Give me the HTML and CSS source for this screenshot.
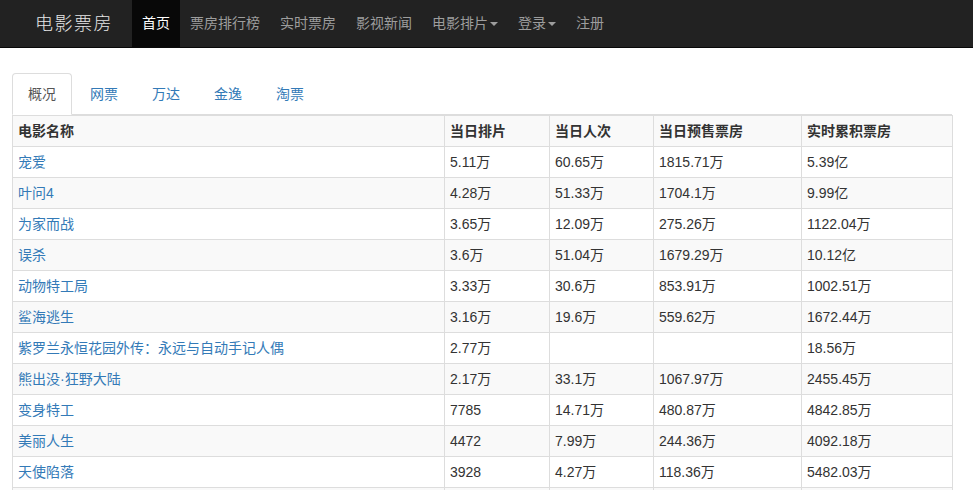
FILE: index.html
```html
<!DOCTYPE html>
<html lang="zh-CN">
<head>
<meta charset="utf-8">
<title>电影票房</title>
<link rel="stylesheet" href="styles.css">
</head>
<body>
<nav class="navbar">
  <a class="brand" href="#">电影票房</a>
  <ul class="nav">
    <li class="active"><a href="#">首页</a></li>
    <li><a href="#">票房排行榜</a></li>
    <li><a href="#">实时票房</a></li>
    <li><a href="#">影视新闻</a></li>
    <li><a href="#">电影排片<span class="caret"></span></a></li>
    <li><a href="#">登录<span class="caret"></span></a></li>
    <li><a href="#">注册</a></li>
  </ul>
</nav>
<main class="content">
  <ul class="tabs">
    <li class="active"><a href="#">概况</a></li>
    <li><a href="#">网票</a></li>
    <li><a href="#">万达</a></li>
    <li><a href="#">金逸</a></li>
    <li><a href="#">淘票</a></li>
  </ul>
  <table class="grid">
    <colgroup>
      <col class="c1"><col class="c2"><col class="c3"><col class="c4"><col class="c5">
    </colgroup>
    <tbody>
      <tr class="head"><th>电影名称</th><th>当日排片</th><th>当日人次</th><th>当日预售票房</th><th>实时累积票房</th></tr>
      <tr><td><a href="#">宠爱</a></td><td>5.11万</td><td>60.65万</td><td>1815.71万</td><td>5.39亿</td></tr>
      <tr><td><a href="#">叶问4</a></td><td>4.28万</td><td>51.33万</td><td>1704.1万</td><td>9.99亿</td></tr>
      <tr><td><a href="#">为家而战</a></td><td>3.65万</td><td>12.09万</td><td>275.26万</td><td>1122.04万</td></tr>
      <tr><td><a href="#">误杀</a></td><td>3.6万</td><td>51.04万</td><td>1679.29万</td><td>10.12亿</td></tr>
      <tr><td><a href="#">动物特工局</a></td><td>3.33万</td><td>30.6万</td><td>853.91万</td><td>1002.51万</td></tr>
      <tr><td><a href="#">鲨海逃生</a></td><td>3.16万</td><td>19.6万</td><td>559.62万</td><td>1672.44万</td></tr>
      <tr><td><a href="#">紫罗兰永恒花园外传：永远与自动手记人偶</a></td><td>2.77万</td><td></td><td></td><td>18.56万</td></tr>
      <tr><td><a href="#">熊出没·狂野大陆</a></td><td>2.17万</td><td>33.1万</td><td>1067.97万</td><td>2455.45万</td></tr>
      <tr><td><a href="#">变身特工</a></td><td>7785</td><td>14.71万</td><td>480.87万</td><td>4842.85万</td></tr>
      <tr><td><a href="#">美丽人生</a></td><td>4472</td><td>7.99万</td><td>244.36万</td><td>4092.18万</td></tr>
      <tr><td><a href="#">天使陷落</a></td><td>3928</td><td>4.27万</td><td>118.36万</td><td>5482.03万</td></tr>
      <tr class="tail"><td></td><td></td><td></td><td></td><td></td></tr>
    </tbody>
  </table>
</main>
</body>
</html>
```
FILE: styles.css
```css
* { box-sizing: border-box; }
html, body { margin: 0; padding: 0; }
body {
  font-family: "Liberation Sans", "Noto Sans CJK SC", sans-serif;
  font-size: 14px;
  line-height: 20px;
  color: #333;
  background: #fff;
}
a { text-decoration: none; }

.navbar {
  display: flex;
  align-items: stretch;
  height: 48px;
  background: #222;
  border-bottom: 1px solid #080808;
}
.brand {
  display: block;
  padding: 12px 0 0 35px;
  width: 132px;
  font-family: "Noto Sans CJK SC", "Liberation Serif", serif;
  font-size: 18px;
  font-weight: 300;
  letter-spacing: 1.5px;
  color: #e6e6e6;
}
.nav {
  display: flex;
  margin: 0;
  padding: 0;
  list-style: none;
}
.nav a {
  display: block;
  padding: 13px 10px 14px;
  color: #9d9d9d;
}
.nav .active a {
  background: #080808;
  color: #fff;
}
.caret {
  display: inline-block;
  width: 0;
  height: 0;
  margin-left: 2px;
  vertical-align: middle;
  border-top: 4px solid #9d9d9d;
  border-left: 4px solid transparent;
  border-right: 4px solid transparent;
}

.content {
  margin-left: 12px;
  width: 940px;
  padding-top: 25px;
}
.tabs {
  display: flex;
  margin: 0;
  padding: 0;
  list-style: none;
  border-bottom: 1px solid #ddd;
}
.tabs li {
  margin-right: 2px;
  margin-bottom: -1px;
}
.tabs a {
  display: block;
  padding: 10px 15px;
  border: 1px solid transparent;
  border-radius: 4px 4px 0 0;
  color: #337ab7;
}
.tabs .active a {
  color: #555;
  background: #fff;
  border-color: #ddd #ddd transparent;
}

.grid {
  width: 940px;
  table-layout: fixed;
  border-collapse: collapse;
  border-spacing: 0;
  border: 1px solid #ddd;
}
.grid .c1 { width: 432px; }
.grid .c2 { width: 105px; }
.grid .c3 { width: 104px; }
.grid .c4 { width: 148px; }
.grid .c5 { width: 151px; }
.grid th, .grid td {
  padding: 5px;
  border: 1px solid #ddd;
  text-align: left;
  vertical-align: top;
  white-space: nowrap;
  overflow: hidden;
}
.grid th { font-weight: bold; }
.grid tr:nth-child(odd) { background: #f9f9f9; }
.grid .tail td { height: 31px; }
.grid a { color: #337ab7; }
```
